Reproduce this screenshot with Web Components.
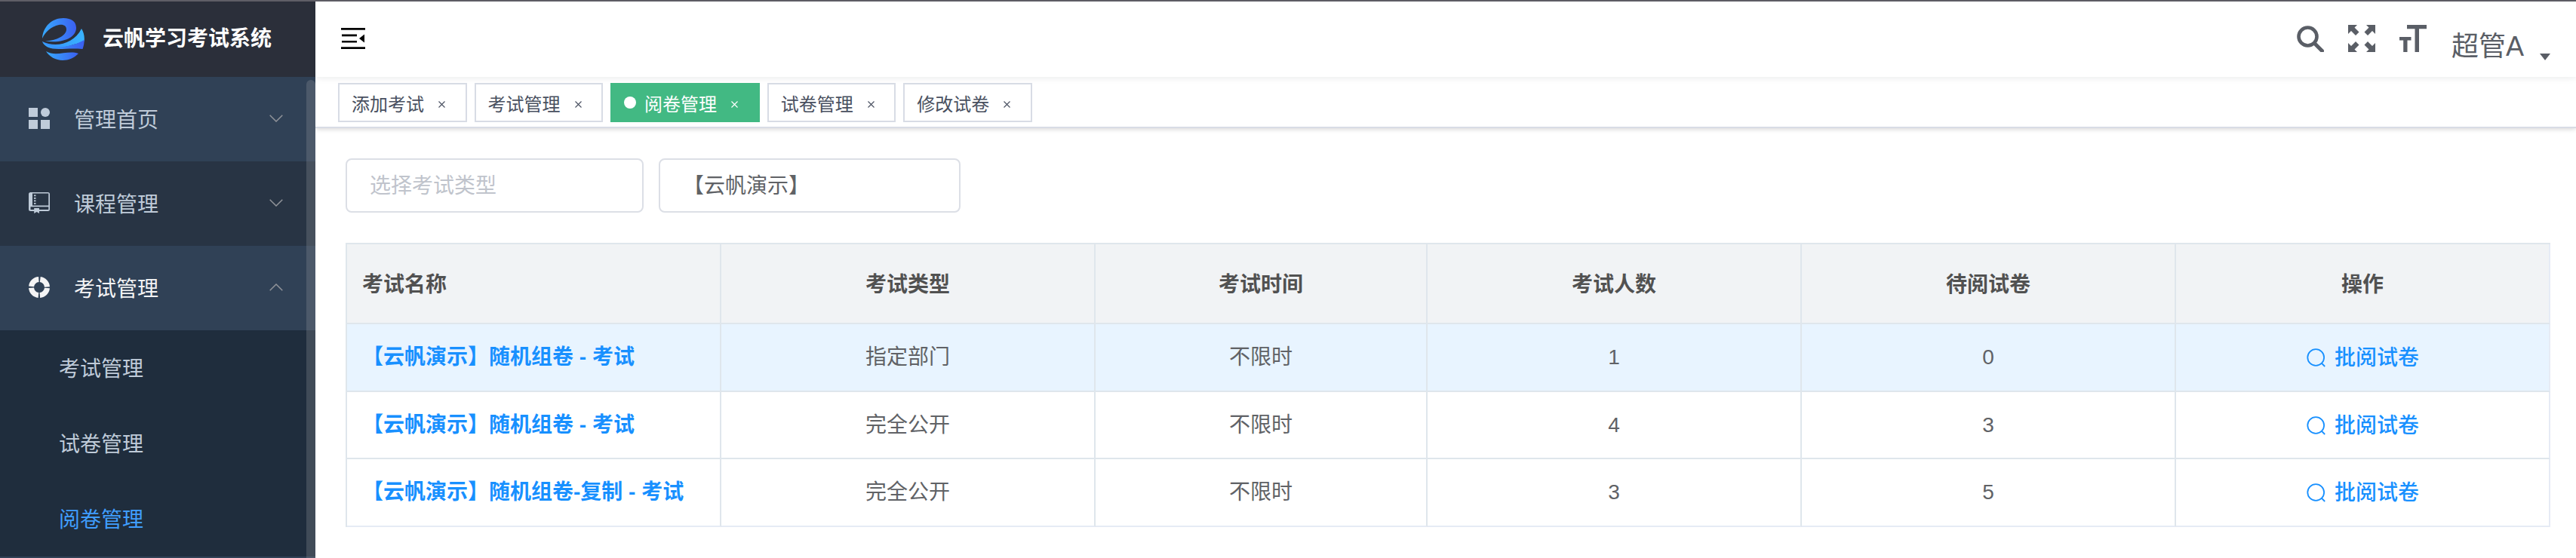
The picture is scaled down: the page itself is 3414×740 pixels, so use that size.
<!DOCTYPE html>
<html lang="zh-CN">
<head>
<meta charset="utf-8">
<title>云帆学习考试系统</title>
<style>
html,body{margin:0;height:100%}
body{font-family:"Liberation Sans","Noto Sans CJK SC",sans-serif;font-size:28px;color:#606266;background:#fff;overflow:hidden}
</style>
</head>
<body>
<exam-app></exam-app>
<script>
const define = (name, html, setup) => {
  const t = document.createElement('template');
  t.innerHTML = html;
  customElements.define(name, class extends HTMLElement {
    connectedCallback() {
      if (this.shadowRoot) return;
      const root = this.attachShadow({mode: 'open'});
      root.append(t.content.cloneNode(true));
      if (setup) setup(this, root);
    }
  });
};

const ICONS = {
  dash: '<path d="M0 0h12v12H0zM0 16h12v12H0zM16 16h12v12H16z"/><circle cx="22" cy="6" r="6"/>',
  book: '<path fill-rule="evenodd" d="M2.500 0H25.500A2.500 2.500 0 0 1 28 2.500V22.500A2.500 2.500 0 0 1 25.500 25H14v3l-3.300-2L7.200 28v-3H2.500A2.500 2.500 0 0 1 0 22.500V2.500A2.500 2.500 0 0 1 2.500 0zM5 1.500V17.500H26.300V1.500zM2.500 19.300V23H7.200V21H14v2H26.300V19.300z"/><path d="M7 3.500h2.500v1.800H7zM7 7h2.500v1.800H7zM7 10.500h2.500v1.800H7zM7 14h2.500v1.800H7z"/>',
  ring: '<circle cx="14" cy="14" r="10.500" fill="none" stroke="currentColor" stroke-width="7" stroke-dasharray="14.500 1.993" stroke-dashoffset="-.997"/>'
};

define('app-logo', `<style>
:host{display:flex;height:100px;box-sizing:border-box;padding-left:56px;align-items:center;background:#2b2f3a;color:#fff}
svg{width:56px;height:56px;margin:0 24px 0 0}
span{font-weight:700;line-height:40px;margin-top:-1px}
</style>
<svg viewBox="0 0 56 56"><defs>
<linearGradient id="a"><stop stop-color="#37aafe"/><stop offset="1" stop-color="#3b5ff0"/></linearGradient>
<linearGradient id="b" x1="0" y1="0" x2="1" y2="0"><stop stop-color="#378cfa"/><stop offset="1" stop-color="#39b4ff"/></linearGradient></defs>
<path fill="url(#a)" d="M0 27C1 11 13 0 28 0C39 0 45 5 45 13C45 25 29 34 4 30.500C19 30 32 23 32 15C32 10 28 8 22 9C12 11 4 18 0 27z"/>
<path fill="url(#b)" d="M0 31C18 40 42 34 52 14C55 19 56.500 25 55.500 31C42 35 30 39 20 40C10 40 3 37 0 31z"/>
<path fill="url(#a)" d="M0 31C8 39 18 39 27 38C38 36.500 47 34 55.500 29C56 33 54.500 38 53.500 41C40 40 31 41 22 41C10 41 3 38 0 31z"/>
<path fill="url(#a)" d="M5 44C18 52 34 42 48 47C42 53 35 56 27 56C18 56 9 51 5 44z"/></svg><span><slot></slot></span>`);

define('menu-item', `<style>
:host{display:flex;height:112px;box-sizing:border-box;padding:0 43px 0 38px;align-items:center;background:#304156;color:#bfcbd9}
:host([dark]){background:#283444}
:host([open]){color:#f4f4f5}
:host([sub]){height:100px;background:#1f2d3d;padding-left:78px}
:host([current]){color:#409eff}
.i{width:28px;height:28px;margin:-2px 32px 0 0;fill:currentColor}
span{flex:1;line-height:40px;padding-top:3px}
.c{width:18px;height:10px;margin-top:-3px;fill:none;stroke:#909399;stroke-width:1.500}
:host([open]) .c{transform:scaleY(-1)}
:host([sub]) svg{display:none}
</style><svg class="i" viewBox="0 0 28 28"></svg><span><slot></slot></span><svg class="c" viewBox="0 0 18 10"><path d="M.7.700 9 9 17.300.7"/></svg>`,
(el, r) => { r.querySelector('.i').innerHTML = ICONS[el.getAttribute('icon')] || ''; });

define('side-bar', `<style>
:host{display:block;width:418px;flex:none;height:738px;background:#304156;overflow:hidden;position:relative}
.bar{position:absolute;right:0;top:104px;width:12px;height:800px;border-radius:6px;background:rgba(144,147,153,.3)}
.tail{height:2px;background:#304156}
</style><app-logo>云帆学习考试系统</app-logo>
<menu-item icon="dash">管理首页</menu-item>
<menu-item icon="book" dark>课程管理</menu-item>
<menu-item icon="ring" open>考试管理</menu-item>
<menu-item sub>考试管理</menu-item><menu-item sub>试卷管理</menu-item><menu-item sub current>阅卷管理</menu-item>
<div class="tail"></div><div class="bar"></div>`);

define('nav-bar', `<style>
:host{display:flex;height:100px;box-sizing:border-box;align-items:flex-start;justify-content:space-between;padding:0 34px;background:#fff;box-shadow:0 2px 8px rgba(0,21,41,.08);color:#5a5e66}
svg{display:block;fill:currentColor}
.ham{width:32px;height:28px;margin-top:35px;color:#000}
.r{display:flex}
.r svg{width:36px;height:36px;margin:31px 32px 0 0}
.u{font-size:36px;line-height:50px;margin:35px 21px 0 1px}
.r .car{width:14px;height:9px;margin:69px 0 0}
</style>
<svg class="ham" viewBox="0 0 32 28"><path d="M0 0h32v2.700H0zM1 8.500h20v2.700H1zM1 16.900h20v2.700H1zM0 25.300h32V28H0zM31 8.500v11L24 14z"/></svg>
<div class="r">
<svg viewBox="0 0 36 36"><g fill="none" stroke="currentColor"><circle cx="14.500" cy="15.500" r="12" stroke-width="4.600"/><path d="M23.500 24.500 33.500 34.500" stroke-width="5" stroke-linecap="round"/></g></svg>
<svg viewBox="0 0 36 36"><path id="p" d="M0 0H12L8.500 3.500 14.500 9.500 10 14 4 8 0 12z"/><use href="#p" transform="matrix(-1 0 0 1 36 0)"/><use href="#p" transform="matrix(1 0 0 -1 0 36)"/><use href="#p" transform="matrix(-1 0 0 -1 36 36)"/></svg>
<svg viewBox="0 0 36 36"><path d="M10 0H36V5.200H26V36H20.500V5.200H10zM0 16H15.500V20.500H10.500V36H5.200V20.500H0z"/></svg>
<span class="u">超管A</span><svg class="car" viewBox="0 0 14 9"><path d="M0 0H14L7 9z"/></svg></div>`);

define('tab-item', `<style>
:host{display:flex;box-sizing:border-box;width:170.500px;height:52px;border:2px solid #d8dce5;background:#fff;color:#495060;padding:0 16px;font-size:24px;align-items:center}
:host([active]){width:197.800px;background:#42b983;border-color:#42b983;color:#fff}
i{display:none;width:16px;height:16px;border-radius:50%;background:#fff;margin-right:11px}
:host([active]) i{display:block}
svg{width:9px;height:9px;margin:4px 0 0 19px;stroke:currentColor;stroke-width:1.100}
</style><i></i><slot></slot><svg viewBox="0 0 9 9"><path d="M.5.500l8 8M8.500.500l-8 8"/></svg>`);

define('tabs-bar', `<style>
:host{display:flex;height:68px;box-sizing:border-box;border-bottom:2px solid #d8dce5;padding:8px 30px 0;gap:10px;box-shadow:0 2px 6px rgba(0,0,0,.12),0 0 6px rgba(0,0,0,.04)}
</style><tab-item>添加考试</tab-item><tab-item>考试管理</tab-item><tab-item active>阅卷管理</tab-item><tab-item>试卷管理</tab-item><tab-item>修改试卷</tab-item>`);

define('filter-input', `<style>
:host{display:block;box-sizing:border-box;width:395px;height:72px;border:2px solid #dcdfe6;border-radius:8px;padding:1px 30px 0;line-height:68px;color:#606266}
:host([empty]){color:#c0c4cc}
:host([wide]){width:400px}
</style><slot></slot>`);

define('review-link', `<style>
:host{display:inline-flex;align-items:center;color:#1890ff;font-weight:500;padding-top:2px}
svg{width:28px;height:28px;margin-right:10px;fill:none;stroke:currentColor;stroke-width:1.800}
</style><svg viewBox="0 0 28 28"><circle cx="13.200" cy="13" r="10.900"/><path d="M20.700 20.500 25.200 25"/></svg><span>批阅试卷</span>`);

define('exam-table', `<style>
:host{display:grid;grid-template-columns:496px 496px 440px 496px 496px 496px;grid-template-rows:106px 90px 89px 90px;border:2px solid #dfe6ec;border-bottom:0;border-right:0;width:2920px;line-height:40px}
div{box-sizing:border-box;border-right:2px solid #dfe6ec;border-bottom:2px solid #dfe6ec;padding:0 20px;display:flex;align-items:center;justify-content:center}
div:nth-of-type(6n){border-right-color:#e6ebf5}
div:nth-of-type(n+19){border-bottom-color:#e6ebf5}
.h{background:#f1f3f5;color:#515151;font-weight:700;padding-top:3px}
.s{background:#e8f4ff}
.l{justify-content:flex-start}
b{color:#1890ff;font-weight:700;white-space:pre}
</style>`, (el, r) => {
  const head = ['考试名称','考试类型','考试时间','考试人数','待阅试卷','操作'];
  const rows = [['【云帆演示】随机组卷 - 考试','指定部门','不限时','1','0'],['【云帆演示】随机组卷 - 考试','完全公开','不限时','4','3'],['【云帆演示】随机组卷-复制 - 考试','完全公开','不限时','3','5']];
  const cell = (c, h) => { const d = document.createElement('div'); d.className = c; d.innerHTML = h; r.append(d); };
  head.forEach((t, i) => cell(i ? 'h' : 'h l', t));
  rows.forEach((row, n) => {
    const s = n ? '' : 's';
    row.forEach((t, i) => cell(s + (i ? '' : ' l'), i ? t : `<b>${t}</b>`));
    cell(s, '<review-link></review-link>');
  });
});

define('exam-app', `<style>
:host{display:flex;box-sizing:border-box;height:740px;border-top:2px solid #5f5e66}
main{flex:1;min-width:0}
nav-bar{position:relative}
.f{display:flex;gap:20px;margin:40px 0 40px 40px}
exam-table{margin-left:40px}
</style><side-bar></side-bar><main><nav-bar></nav-bar><tabs-bar></tabs-bar>
<div class="f"><filter-input empty>选择考试类型</filter-input><filter-input wide>【云帆演示】</filter-input></div>
<exam-table></exam-table></main>`);
</script>
</body>
</html>
